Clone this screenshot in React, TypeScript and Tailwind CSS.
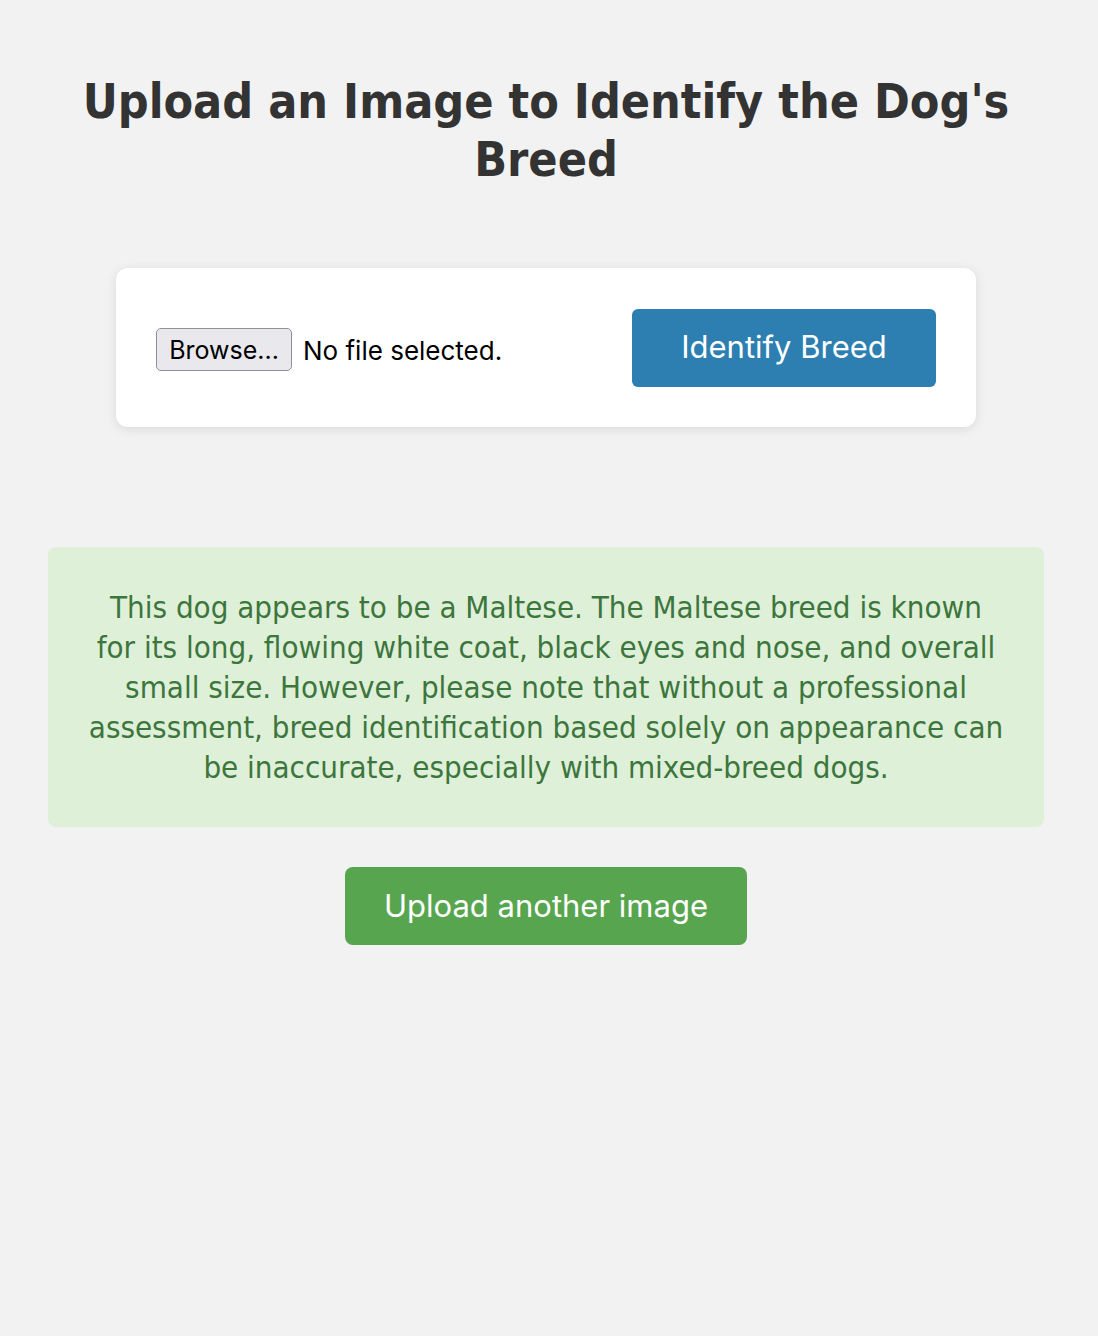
export default function App() {
  const tahoma = { fontFamily: '"DejaVu Sans Condensed", "DejaVu Sans", sans-serif' };
  const sys = { fontFamily: 'Inter, "Noto Sans", sans-serif' };
  return (
    <div className="min-h-[1336px] w-full bg-[#f2f2f2] pl-12 pr-[54px] pt-[72px]">
      <h1
        className="text-center text-[48px] font-bold leading-[58px] text-[#333333]"
        style={tahoma}
      >
        Upload an Image to Identify the Dog's
        <br />
        Breed
      </h1>
      <div className="mx-auto mt-[80px] flex h-[159px] w-[860px] items-center justify-between rounded-xl bg-white px-10 shadow-[0_2px_12px_rgba(0,0,0,0.1)]">
        <div className="mt-1 flex items-center gap-[11px]" style={sys}>
          <div className="flex h-[43px] w-[136px] items-center justify-center rounded-[5px] border border-[#8f8f9d] bg-[#e9e9ed] pt-[2px] text-[25px] text-black">
            Browse...
          </div>
          <span className="pt-[2px] text-[26px] text-black">No file selected.</span>
        </div>
        <button
          className="h-[78px] w-[304px] rounded-md bg-[#2c7fb0] text-[31px] text-white"
          style={sys}
        >
          Identify Breed
        </button>
      </div>
      <div
        className="mt-[120px] rounded-lg bg-[#dff0d8] px-4 py-10 text-center text-[31px] leading-[40px] text-[#3c763d]"
        style={tahoma}
      >
        This dog appears to be a Maltese. The Maltese breed is known
        <br />
        for its long, flowing white coat, black eyes and nose, and overall
        <br />
        small size. However, please note that without a professional
        <br />
        assessment, breed identification based solely on appearance can
        <br />
        be inaccurate, especially with mixed-breed dogs.
      </div>
      <div className="mt-10 flex justify-center">
        <button
          className="h-[78px] w-[402px] rounded-lg bg-[#57a64f] text-[31px] text-white"
          style={sys}
        >
          Upload another image
        </button>
      </div>
    </div>
  );
}
